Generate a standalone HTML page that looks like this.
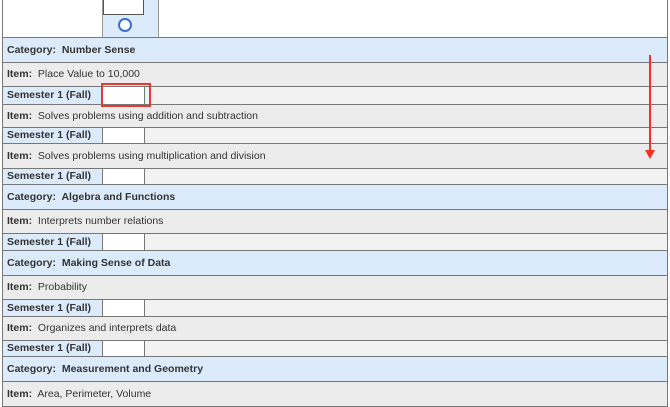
<!DOCTYPE html><html><head><style>
body{margin:0;width:670px;height:407px;background:#fff;font-family:"Liberation Sans",sans-serif;font-size:10.5px;color:#333;position:relative;overflow:hidden}
.r{position:absolute;left:2px;width:666px;box-sizing:border-box;border-top:1px solid #777;border-left:1px solid #777;border-right:1px solid #777}
.cat{background:#dcebfc;font-weight:bold;padding-left:4px}
.item{background:#ececec;padding-left:4px}
.sem{background:#f2f2f2}
.sem .l{position:absolute;left:0;top:0;bottom:0;width:100px;background:#dcebfc;font-weight:bold;padding-left:4px;box-sizing:border-box;border-right:1px solid #777}
.sem .w{position:absolute;left:100px;top:0;bottom:0;width:41px;background:#fff;border-right:1px solid #777}
</style></head><body>
<div style="position:absolute;left:2px;top:0;width:1px;height:37px;background:#777"></div>
<div style="position:absolute;left:667px;top:0;width:1px;height:37px;background:#777"></div>
<div style="position:absolute;left:102px;top:0;width:57px;height:37px;background:#dcebfc;border-left:1px solid #999;border-right:1px solid #999;box-sizing:border-box"></div>
<div style="position:absolute;left:103px;top:0;width:41px;height:15px;background:#fff;border:1px solid #555;border-top:none;box-sizing:border-box"></div>
<div style="position:absolute;left:118px;top:18px;width:10px;height:10px;border:2px solid #3a6fd0;border-radius:50%;background:#fff"></div>
<div id="rows"></div>
<script>
var R=[[37,25,'c','Number Sense'],[62,24,'i','Place Value to 10,000'],[86,18,'s'],[104,23,'i','Solves problems using addition and subtraction'],[127,16,'s'],[143,25,'i','Solves problems using multiplication and division'],[168,16,'s'],[184,25,'c','Algebra and Functions'],[209,24,'i','Interprets number relations'],[233,17,'s'],[250,25,'c','Making Sense of Data'],[275,24,'i','Probability'],[299,17,'s'],[316,24,'i','Organizes and interprets data'],[340,16,'s'],[356,25,'c','Measurement and Geometry'],[381,26,'i','Area, Perimeter, Volume']];
var h='';R.forEach(function(r){var st='top:'+r[0]+'px;height:'+r[1]+'px;line-height:'+(r[1]-1)+'px;';
if(r[2]=='c')h+='<div class="r cat" style="'+st+'">Category:&nbsp; '+r[3]+'</div>';
else if(r[2]=='i')h+='<div class="r item" style="'+st+'"><b>Item:</b>&nbsp; '+r[3]+'</div>';
else h+='<div class="r sem" style="'+st+'"><div class="l">Semester 1 (Fall)</div><div class="w"></div></div>';});
document.getElementById('rows').innerHTML=h;
</script>
<div style="position:absolute;left:2px;top:406px;width:666px;height:1px;background:#777"></div>
<div style="position:absolute;left:101px;top:83px;width:50px;height:24px;border:2px solid #e8392b;box-sizing:border-box"></div>
<div style="position:absolute;left:649px;top:55px;width:2px;height:96px;background:#f0321e"></div>
<div style="position:absolute;left:645px;top:150px;width:0;height:0;border-left:5px solid transparent;border-right:5px solid transparent;border-top:9px solid #f0321e"></div>
</body></html>
